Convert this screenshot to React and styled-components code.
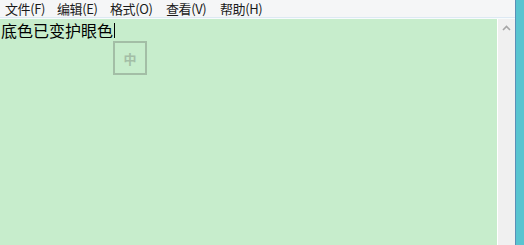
import React from "react";
import styled, { createGlobalStyle } from "styled-components";

const Global = createGlobalStyle`
  html, body { margin: 0; padding: 0; }
  body {
    width: 524px;
    height: 245px;
    overflow: hidden;
    font-family: "Noto Sans CJK SC", "Noto Sans", sans-serif;
  }
  #root { height: 100%; }
`;

const Window = styled.div`
  display: flex;
  width: 524px;
  height: 245px;
`;

const Main = styled.div`
  flex: 1;
  display: flex;
  flex-direction: column;
  min-width: 0;
`;

const MenuBar = styled.div`
  display: flex;
  align-items: center;
  height: 17px;
  padding-left: 5px;
  background: #f5f6f7;
  border-bottom: 1px solid #dde9f3;
  box-shadow: 0 1px 0 #f7fbfd;
`;

const MenuItem = styled.span`
  width: ${(p) => p.$w}px;
  font-size: 13px;
  line-height: 17px;
  color: #1a1a1a;
  letter-spacing: -0.4px;
  white-space: nowrap;
`;

const Body = styled.div`
  flex: 1;
  display: flex;
  margin-top: 1px;
`;

const Editor = styled.div`
  position: relative;
  flex: 1;
  background: #c7edcc;
  padding: 1px 0 0 1px;
`;

const Text = styled.div`
  display: flex;
  align-items: center;
  font-size: 16px;
  line-height: 20px;
  color: #000;
`;

const Caret = styled.span`
  display: inline-block;
  width: 1px;
  height: 15px;
  margin-left: 1px;
  background: #000;
`;

const Ime = styled.div`
  position: absolute;
  left: 113px;
  top: 22px;
  width: 30px;
  height: 30px;
  border: 2px solid #a3bea6;
  display: flex;
  align-items: center;
  justify-content: center;
  font-size: 13px;
  font-weight: bold;
  color: #a3bea6;
`;

const ScrollBar = styled.div`
  width: 17px;
  background: #f0f0f0;
  border-left: 1px solid #ffffff;
  display: flex;
  justify-content: center;
  padding-top: 6px;
`;

const Edge = styled.div`
  width: 8px;
  background: #58c4d0;
  border-left: 1px solid #5b8fb6;
`;

const menus = [
  ["文件(F)", 52],
  ["编辑(E)", 53],
  ["格式(O)", 56],
  ["查看(V)", 54],
  ["帮助(H)", 50],
];

export default function App() {
  return (
    <Window>
      <Global />
      <Main>
        <MenuBar>
          {menus.map(([m, w]) => (
            <MenuItem key={m} $w={w}>
              {m}
            </MenuItem>
          ))}
        </MenuBar>
        <Body>
          <Editor>
            <Text>
              底色已变护眼色
              <Caret />
            </Text>
            <Ime>中</Ime>
          </Editor>
          <ScrollBar>
            <svg width="9" height="6" viewBox="0 0 9 6">
              <path d="M1 5 L4.5 1.5 L8 5" fill="none" stroke="#a6a6a6" strokeWidth="1.6" />
            </svg>
          </ScrollBar>
        </Body>
      </Main>
      <Edge />
    </Window>
  );
}
